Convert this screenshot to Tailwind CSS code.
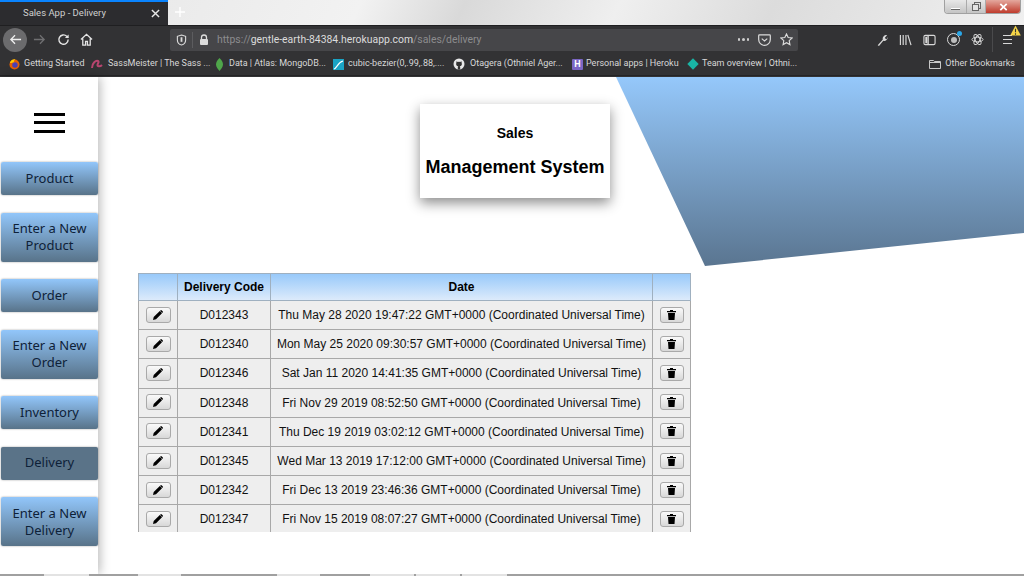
<!DOCTYPE html>
<html>
<head>
<title>Sales App - Delivery</title>
<meta charset="UTF-8" />
<script src="https://cdn.jsdelivr.net/npm/@tailwindcss/browser@4"></script>
</head>
<body class="bg-white">
<div class="w-[1024px] h-[576px] overflow-hidden flex flex-col font-['Roboto',sans-serif]">

  <!-- browser chrome -->
  <div class="h-[77px] shrink-0 flex flex-col bg-[#323234] text-[#d8d8d8] text-[9.5px]">
    <div class="relative h-[25px] flex bg-[linear-gradient(115deg,#e4e4e4_0%,#f2f2f2_35%,#d9d9d9_45%,#efefef_60%,#dcdcdc_75%,#f0f0f0_100%)]">
      <div class="w-[168px] bg-[#2c2c2f] border-t-2 border-[#0a84ff] flex items-center pl-[23px] pr-[8px] justify-between">
        <span class="text-[#d0d0d0]">Sales App - Delivery</span>
        <svg class="w-[9px] h-[9px]" viewBox="0 0 10 10"><path d="M1 1l8 8M9 1l-8 8" stroke="#e8e8e8" stroke-width="1.6"/></svg>
      </div>
      <svg class="w-[10px] h-[10px] ml-[7px] mt-[7px]" viewBox="0 0 10 10"><path d="M5 0v10M0 5h10" stroke="#fff" stroke-width="1.4"/></svg>
      <div class="absolute right-[3px] top-0 h-[14px] w-[77px] flex rounded-b-[4px] overflow-hidden border border-t-0 border-[#a0a0a0]">
        <div class="w-[21px] bg-[linear-gradient(#e8e8e8,#c4c4c4)] flex items-end justify-center pb-[3px]"><div class="w-[9px] h-[2px] bg-white border-b border-[#666]"></div></div>
        <div class="w-[20px] bg-[linear-gradient(#e8e8e8,#c4c4c4)] flex items-center justify-center border-x border-[#aaa]">
          <svg class="w-[9px] h-[9px]" viewBox="0 0 9 9" fill="none" stroke="#666"><rect x="2.500" y=".5" width="6" height="6"/><rect x=".5" y="2.500" width="6" height="6" fill="#e4e4e4"/></svg>
        </div>
        <div class="flex-1 bg-[linear-gradient(#e4a89e,#bf3b2c)] flex items-center justify-center">
          <svg class="w-[9px] h-[8px]" viewBox="0 0 10 10"><path d="M1 1l8 8M9 1l-8 8" stroke="#fff" stroke-width="2.2"/></svg>
        </div>
      </div>
    </div>

    <div class="h-[28px] flex items-center border-t border-[#1f1f21]">
      <div class="w-[24px] h-[24px] ml-[3px] shrink-0 rounded-full bg-[#6b6b6d] flex items-center justify-center">
        <svg class="w-[13px] h-[13px]" viewBox="0 0 14 14" fill="none" stroke="#eee" stroke-width="1.4"><path d="M13 7H2M6.500 2.500L2 7l4.500 4.500"/></svg>
      </div>
      <svg class="w-[13px] h-[13px] ml-[6px] shrink-0" viewBox="0 0 14 14" fill="none" stroke="#6f6f71" stroke-width="1.4"><path d="M1 7h11M7.500 2.500L12 7l-4.500 4.500"/></svg>
      <svg class="w-[13px] h-[13px] ml-[11px] shrink-0" viewBox="0 0 14 14" fill="none" stroke="#e4e4e4" stroke-width="1.5"><path d="M12 7a5 5 0 1 1-1.500-3.500L12 5"/><path d="M12.500 1.500V5.500H8.500" fill="#e4e4e4" stroke="none"/></svg>
      <svg class="w-[13px] h-[13px] ml-[10px] shrink-0" viewBox="0 0 14 14" fill="none" stroke="#e4e4e4" stroke-width="1.4"><path d="M1 7l6-5.500L13 7M3 6v7h3V9h2v4h3V6"/></svg>
      <div class="w-[628px] h-[22px] ml-[77px] shrink-0 bg-[#464649] rounded-[2px] flex items-center text-[10.4px]">
        <svg class="w-[11px] h-[12px] ml-[6px]" viewBox="0 0 12 13" fill="none" stroke="#dcdcdc" stroke-width="1.2"><path d="M6 1l4.500 1.500v4C10.500 9.500 8 11.500 6 12 4 11.500 1.500 9.500 1.500 6.500v-4z"/><path d="M6 3.500v5" stroke-width="2"/></svg>
        <div class="w-px h-[16px] bg-[#5c5c5f] ml-[5px]"></div>
        <svg class="w-[10px] h-[11px] ml-[6px]" viewBox="0 0 10 11"><path d="M2.500 5V3.500a2.500 2.500 0 0 1 5 0V5" fill="none" stroke="#dcdcdc" stroke-width="1.300"/><rect x="1" y="5" width="8" height="6" rx="1" fill="#dcdcdc"/></svg>
        <span class="ml-[8px] text-[#8c8c8e]">https://</span><span class="text-[#dcdcdc]">gentle-earth-84384.herokuapp.com</span><span class="text-[#8c8c8e]">/sales/delivery</span>
        <div class="ml-auto flex items-center gap-[9px] pr-[5px]">
          <span class="flex gap-[2px]"><i class="w-[2.500px] h-[2.500px] rounded-full bg-[#cfcfcf]"></i><i class="w-[2.500px] h-[2.500px] rounded-full bg-[#cfcfcf]"></i><i class="w-[2.500px] h-[2.500px] rounded-full bg-[#cfcfcf]"></i></span>
          <svg class="w-[13px] h-[12px]" viewBox="0 0 14 13" fill="none" stroke="#dcdcdc" stroke-width="1.300"><path d="M1.500 1h11a.8.8 0 0 1 .8.8V6A6.300 6.300 0 0 1 .7 6V1.800a.8.8 0 0 1 .8-.8z"/><path d="M4 5l3 2.500L10 5"/></svg>
          <svg class="w-[13px] h-[13px]" viewBox="0 0 14 14" fill="none" stroke="#dcdcdc" stroke-width="1.200"><path d="M7 1l1.800 3.900 4.200.5-3.100 2.900.8 4.200L7 10.400 3.300 12.500l.8-4.200L1 5.400l4.200-.5z"/></svg>
        </div>
      </div>
      <svg class="w-[12px] h-[12px] ml-[78px] shrink-0" viewBox="0 0 14 14"><path d="M2 13l6-6.500a4 4 0 0 1 5-5L10.500 4l.5 1.500 1.500.5 1-2.500a4 4 0 0 1-5 4.500L3.500 14z" fill="#d8d8d8"/></svg>
      <svg class="w-[13px] h-[12px] ml-[11px] shrink-0" viewBox="0 0 14 13" fill="none" stroke="#d8d8d8" stroke-width="1.300"><path d="M1.500 1v11M4.500 1v11M7.500 1v11M9.500 1l3.500 11"/></svg>
      <svg class="w-[13px] h-[12px] ml-[11px] shrink-0" viewBox="0 0 14 12" fill="none" stroke="#d8d8d8" stroke-width="1.200"><rect x="1" y="1" width="12" height="10" rx="1.500"/><path d="M5.500 1v10" stroke-width="1.500"/><path d="M2.500 2.500h2v7h-2z" fill="#d8d8d8" stroke="none"/></svg>
      <div class="relative w-[13px] h-[13px] ml-[11px] shrink-0 rounded-full border border-[#d8d8d8] flex items-center justify-center">
        <div class="w-[6px] h-[6px] rounded-full bg-[#bdbdbd]"></div>
        <div class="absolute -top-[3px] -right-[3px] w-[5px] h-[5px] rounded-full bg-[#2aa7e8]"></div>
      </div>
      <svg class="w-[13px] h-[13px] ml-[11px] shrink-0" viewBox="0 0 14 14" fill="none" stroke="#d8d8d8"><ellipse cx="7" cy="7" rx="6" ry="2.500"/><ellipse cx="7" cy="7" rx="6" ry="2.500" transform="rotate(60 7 7)"/><ellipse cx="7" cy="7" rx="6" ry="2.500" transform="rotate(120 7 7)"/></svg>
      <div class="w-px h-[25px] bg-[#4a4a4c] ml-[8px] shrink-0"></div>
      <div class="relative w-[9px] ml-[10px] shrink-0 flex flex-col gap-[3px]">
        <i class="h-px bg-[#d8d8d8]"></i><i class="h-px bg-[#d8d8d8]"></i><i class="h-px bg-[#d8d8d8]"></i>
        <svg class="absolute -top-[10px] left-[7px] w-[11px] h-[11px]" viewBox="0 0 12 12"><path d="M6 .5L11.800 11.500H.2z" fill="#f5d547"/><path d="M6 4v4M6 9v1.500" stroke="#333" stroke-width="1.200"/></svg>
      </div>
    </div>

    <div class="h-[23px] flex items-center text-[9px] pl-[9px] border-b border-[#242426]">
      <span class="flex items-center gap-[4px] w-[82px]">
        <svg class="w-[11px] h-[11px] shrink-0" viewBox="0 0 12 12"><circle cx="6" cy="6" r="5.500" fill="#e66000"/><circle cx="6.500" cy="6.500" r="3" fill="#4b3fb5"/><path d="M1 4c1-3 4-4 6-3.500C5 1.500 5 3 6 3.500 3 3.500 2 5 1 4z" fill="#ffcb00"/></svg>Getting Started</span>
      <span class="flex items-center gap-[5px] w-[125px]">
        <svg class="w-[12px] h-[10px] shrink-0" viewBox="0 0 12 10" fill="none" stroke="#b8456f" stroke-width="2"><path d="M1 9C1 4 5 1 7 2c2 1-2 4 0 5s3 0 4-1"/></svg>SassMeister | The Sass ...</span>
      <span class="flex items-center gap-[6px] w-[117px]">
        <svg class="w-[7px] h-[13px] shrink-0" viewBox="0 0 7 13"><path d="M3.500 0C5.500 2 7 4 7 6.500S5 11 3.500 13C2 11 0 9 0 6.500S1.500 2 3.500 0z" fill="#4fa64a"/></svg>Data | Atlas: MongoDB...</span>
      <span class="flex items-center gap-[4px] w-[120px]">
        <span class="w-[11px] h-[11px] shrink-0 bg-[#1aa3c4] overflow-hidden"><svg class="w-[11px] h-[11px]" viewBox="0 0 11 11" fill="none" stroke="#fff" stroke-width="1.200"><path d="M1 10C4 9 5 3 10 2"/></svg></span>cubic-bezier(0,.99,.88,....</span>
      <span class="flex items-center gap-[5px] w-[119px]">
        <svg class="w-[12px] h-[12px] shrink-0" viewBox="0 0 12 12"><circle cx="6" cy="6" r="5.500" fill="#e8e8e8"/><path d="M3.500 3.200l1.300.7a4 4 0 0 1 2.400 0l1.300-.7.200 1.800c.6 1.700-.3 3-2 3.300.4.300.5.700.5 1.200V11.500h-2.400V9.500c0-.5.100-.9.500-1.200-1.700-.3-2.600-1.600-2-3.300z" fill="#333"/></svg>Otagera (Othniel Ager...</span>
      <span class="flex items-center gap-[3px] w-[116px]">
        <span class="w-[11px] h-[11px] shrink-0 rounded-[1px] bg-[#7b66c4] text-white font-bold text-[9px] leading-[11px] text-center">H</span>Personal apps | Heroku</span>
      <span class="flex items-center gap-[4px]">
        <i class="w-[8px] h-[8px] mx-[1px] rotate-45 bg-[#19b5a5] shrink-0"></i>Team overview | Othni...</span>
      <span class="ml-auto flex items-center gap-[4px] pr-[9px]">
        <svg class="w-[12px] h-[10px]" viewBox="0 0 12 10" fill="none" stroke="#c8c8c8"><path d="M.5 1.500h4l1 1h6v7H.5z"/><path d="M.5 3.500h11"/></svg>Other Bookmarks</span>
    </div>
  </div>

  <!-- page -->
  <div class="relative flex-1 flex min-h-0 bg-white">
    <div class="absolute top-0 left-0 w-[1024px] h-[189px] bg-[linear-gradient(#95c8fb,#5a7590)] [clip-path:polygon(616px_0,1024px_0,1024px_156px,705px_189px)]"></div>

    <nav class="relative z-10 w-[98px] shrink-0 bg-white shadow-[2px_0_10px_rgba(0,0,0,0.28)] pl-[1px] flex flex-col text-[13px] text-center leading-[17px] text-[#0e2138] font-['Noto_Sans',sans-serif]">
      <div class="h-[85px] flex flex-col items-center justify-center gap-[5.500px] pt-[10px] pb-[4px]">
        <i class="w-[31px] h-[3px] bg-black"></i><i class="w-[31px] h-[3px] bg-black"></i><i class="w-[31px] h-[3px] bg-black"></i>
      </div>
      <div class="flex flex-col gap-[17.500px]">
        <a class="h-[33px] pb-[1px] flex items-center justify-center rounded-[2px] bg-[linear-gradient(#92c6fa,#587389)] shadow-[0_0_2px_rgba(0,0,0,0.4)]">Product</a>
        <a class="h-[49px] flex items-center justify-center rounded-[2px] bg-[linear-gradient(#92c6fa,#587389)] shadow-[0_0_2px_rgba(0,0,0,0.4)]">Enter a New<br />Product</a>
        <a class="h-[33px] flex items-center justify-center rounded-[2px] bg-[linear-gradient(#92c6fa,#587389)] shadow-[0_0_2px_rgba(0,0,0,0.4)]">Order</a>
        <a class="h-[49px] flex items-center justify-center rounded-[2px] bg-[linear-gradient(#92c6fa,#587389)] shadow-[0_0_2px_rgba(0,0,0,0.4)]">Enter a New<br />Order</a>
        <a class="h-[33px] flex items-center justify-center rounded-[2px] bg-[linear-gradient(#92c6fa,#587389)] shadow-[0_0_2px_rgba(0,0,0,0.4)]">Inventory</a>
        <a class="h-[33px] pb-[1px] flex items-center justify-center rounded-[2px] bg-[#5a7388] shadow-[0_0_2px_rgba(0,0,0,0.4)]">Delivery</a>
        <a class="h-[49px] flex items-center justify-center rounded-[2px] bg-[linear-gradient(#92c6fa,#587389)] shadow-[0_0_2px_rgba(0,0,0,0.4)]">Enter a New<br />Delivery</a>
      </div>
    </nav>

    <main class="relative flex-1 min-w-0 font-['Liberation_Sans',sans-serif] text-black">
      <div class="w-[190px] h-[94px] ml-[322px] mt-[27px] bg-white shadow-[0_5px_12px_rgba(0,0,0,0.45)] flex flex-col items-center font-bold">
        <div class="text-[14px] leading-[16px] mt-[21px]">Sales</div>
        <div class="text-[18px] leading-[21px] mt-[16px]">Management System</div>
      </div>

      <div class="w-[553px] h-[259px] ml-[40px] mt-[75px] overflow-hidden">
        <table class="w-[552px] table-fixed border-collapse text-[12px] text-center text-[#111]">
          <thead>
            <tr class="h-[27px] bg-[linear-gradient(#98c9fa,#dfecfb)]">
              <th class="w-[39px] border border-[#9fb0c0]"></th>
              <th class="w-[93px] border border-[#9fb0c0] text-black">Delivery Code</th>
              <th class="w-[382px] border border-[#9fb0c0] text-black">Date</th>
              <th class="w-[38px] border border-[#9fb0c0]"></th>
            </tr>
          </thead>
          <tbody class="bg-[#eeeeee]">
            <tr class="h-[29.200px]">
              <td class="border border-[#a8a8a8]"><button class="w-[25px] h-[16px] mb-[1px] mx-auto flex items-center justify-center rounded-[3px] border border-[#a9a9a9] bg-[linear-gradient(#fafafa,#d8d8d8)]"><svg class="w-[10px] h-[10px]" viewBox="0 0 10 10"><path d="M0 10l.7-3L6.800 1 9 3.200 3 9.300zM7.400.4a1 1 0 0 1 1.400 0l.8.8a1 1 0 0 1 0 1.400l-.3.300L7.100.7z" fill="#000"/></svg></button></td>
              <td class="border border-[#a8a8a8]">D012343</td>
              <td class="border border-[#a8a8a8]">Thu May 28 2020 19:47:22 GMT+0000 (Coordinated Universal Time)</td>
              <td class="border border-[#a8a8a8]"><button class="w-[24px] h-[16px] mb-[1px] mx-auto flex items-center justify-center rounded-[3px] border border-[#a9a9a9] bg-[linear-gradient(#fafafa,#d8d8d8)]"><svg class="w-[9px] h-[10px]" viewBox="0 0 9 10"><path d="M0 1h3V0h3v1h3v1.200H0zM1 3h7l-.5 7h-6z" fill="#000"/></svg></button></td>
            </tr>
            <tr class="h-[29.200px]">
              <td class="border border-[#a8a8a8]"><button class="w-[25px] h-[16px] mb-[1px] mx-auto flex items-center justify-center rounded-[3px] border border-[#a9a9a9] bg-[linear-gradient(#fafafa,#d8d8d8)]"><svg class="w-[10px] h-[10px]" viewBox="0 0 10 10"><path d="M0 10l.7-3L6.800 1 9 3.200 3 9.300zM7.400.4a1 1 0 0 1 1.400 0l.8.8a1 1 0 0 1 0 1.400l-.3.300L7.100.7z" fill="#000"/></svg></button></td>
              <td class="border border-[#a8a8a8]">D012340</td>
              <td class="border border-[#a8a8a8]">Mon May 25 2020 09:30:57 GMT+0000 (Coordinated Universal Time)</td>
              <td class="border border-[#a8a8a8]"><button class="w-[24px] h-[16px] mb-[1px] mx-auto flex items-center justify-center rounded-[3px] border border-[#a9a9a9] bg-[linear-gradient(#fafafa,#d8d8d8)]"><svg class="w-[9px] h-[10px]" viewBox="0 0 9 10"><path d="M0 1h3V0h3v1h3v1.200H0zM1 3h7l-.5 7h-6z" fill="#000"/></svg></button></td>
            </tr>
            <tr class="h-[29.200px]">
              <td class="border border-[#a8a8a8]"><button class="w-[25px] h-[16px] mb-[1px] mx-auto flex items-center justify-center rounded-[3px] border border-[#a9a9a9] bg-[linear-gradient(#fafafa,#d8d8d8)]"><svg class="w-[10px] h-[10px]" viewBox="0 0 10 10"><path d="M0 10l.7-3L6.800 1 9 3.200 3 9.300zM7.400.4a1 1 0 0 1 1.400 0l.8.8a1 1 0 0 1 0 1.400l-.3.300L7.100.7z" fill="#000"/></svg></button></td>
              <td class="border border-[#a8a8a8]">D012346</td>
              <td class="border border-[#a8a8a8]">Sat Jan 11 2020 14:41:35 GMT+0000 (Coordinated Universal Time)</td>
              <td class="border border-[#a8a8a8]"><button class="w-[24px] h-[16px] mb-[1px] mx-auto flex items-center justify-center rounded-[3px] border border-[#a9a9a9] bg-[linear-gradient(#fafafa,#d8d8d8)]"><svg class="w-[9px] h-[10px]" viewBox="0 0 9 10"><path d="M0 1h3V0h3v1h3v1.200H0zM1 3h7l-.5 7h-6z" fill="#000"/></svg></button></td>
            </tr>
            <tr class="h-[29.200px]">
              <td class="border border-[#a8a8a8]"><button class="w-[25px] h-[16px] mb-[1px] mx-auto flex items-center justify-center rounded-[3px] border border-[#a9a9a9] bg-[linear-gradient(#fafafa,#d8d8d8)]"><svg class="w-[10px] h-[10px]" viewBox="0 0 10 10"><path d="M0 10l.7-3L6.800 1 9 3.200 3 9.300zM7.400.4a1 1 0 0 1 1.400 0l.8.8a1 1 0 0 1 0 1.400l-.3.300L7.100.7z" fill="#000"/></svg></button></td>
              <td class="border border-[#a8a8a8]">D012348</td>
              <td class="border border-[#a8a8a8]">Fri Nov 29 2019 08:52:50 GMT+0000 (Coordinated Universal Time)</td>
              <td class="border border-[#a8a8a8]"><button class="w-[24px] h-[16px] mb-[1px] mx-auto flex items-center justify-center rounded-[3px] border border-[#a9a9a9] bg-[linear-gradient(#fafafa,#d8d8d8)]"><svg class="w-[9px] h-[10px]" viewBox="0 0 9 10"><path d="M0 1h3V0h3v1h3v1.200H0zM1 3h7l-.5 7h-6z" fill="#000"/></svg></button></td>
            </tr>
            <tr class="h-[29.200px]">
              <td class="border border-[#a8a8a8]"><button class="w-[25px] h-[16px] mb-[1px] mx-auto flex items-center justify-center rounded-[3px] border border-[#a9a9a9] bg-[linear-gradient(#fafafa,#d8d8d8)]"><svg class="w-[10px] h-[10px]" viewBox="0 0 10 10"><path d="M0 10l.7-3L6.800 1 9 3.200 3 9.300zM7.400.4a1 1 0 0 1 1.400 0l.8.8a1 1 0 0 1 0 1.400l-.3.300L7.100.7z" fill="#000"/></svg></button></td>
              <td class="border border-[#a8a8a8]">D012341</td>
              <td class="border border-[#a8a8a8]">Thu Dec 19 2019 03:02:12 GMT+0000 (Coordinated Universal Time)</td>
              <td class="border border-[#a8a8a8]"><button class="w-[24px] h-[16px] mb-[1px] mx-auto flex items-center justify-center rounded-[3px] border border-[#a9a9a9] bg-[linear-gradient(#fafafa,#d8d8d8)]"><svg class="w-[9px] h-[10px]" viewBox="0 0 9 10"><path d="M0 1h3V0h3v1h3v1.200H0zM1 3h7l-.5 7h-6z" fill="#000"/></svg></button></td>
            </tr>
            <tr class="h-[29.200px]">
              <td class="border border-[#a8a8a8]"><button class="w-[25px] h-[16px] mb-[1px] mx-auto flex items-center justify-center rounded-[3px] border border-[#a9a9a9] bg-[linear-gradient(#fafafa,#d8d8d8)]"><svg class="w-[10px] h-[10px]" viewBox="0 0 10 10"><path d="M0 10l.7-3L6.800 1 9 3.200 3 9.300zM7.400.4a1 1 0 0 1 1.400 0l.8.8a1 1 0 0 1 0 1.400l-.3.300L7.100.7z" fill="#000"/></svg></button></td>
              <td class="border border-[#a8a8a8]">D012345</td>
              <td class="border border-[#a8a8a8]">Wed Mar 13 2019 17:12:00 GMT+0000 (Coordinated Universal Time)</td>
              <td class="border border-[#a8a8a8]"><button class="w-[24px] h-[16px] mb-[1px] mx-auto flex items-center justify-center rounded-[3px] border border-[#a9a9a9] bg-[linear-gradient(#fafafa,#d8d8d8)]"><svg class="w-[9px] h-[10px]" viewBox="0 0 9 10"><path d="M0 1h3V0h3v1h3v1.200H0zM1 3h7l-.5 7h-6z" fill="#000"/></svg></button></td>
            </tr>
            <tr class="h-[29.200px]">
              <td class="border border-[#a8a8a8]"><button class="w-[25px] h-[16px] mb-[1px] mx-auto flex items-center justify-center rounded-[3px] border border-[#a9a9a9] bg-[linear-gradient(#fafafa,#d8d8d8)]"><svg class="w-[10px] h-[10px]" viewBox="0 0 10 10"><path d="M0 10l.7-3L6.800 1 9 3.200 3 9.300zM7.400.4a1 1 0 0 1 1.400 0l.8.8a1 1 0 0 1 0 1.400l-.3.300L7.100.7z" fill="#000"/></svg></button></td>
              <td class="border border-[#a8a8a8]">D012342</td>
              <td class="border border-[#a8a8a8]">Fri Dec 13 2019 23:46:36 GMT+0000 (Coordinated Universal Time)</td>
              <td class="border border-[#a8a8a8]"><button class="w-[24px] h-[16px] mb-[1px] mx-auto flex items-center justify-center rounded-[3px] border border-[#a9a9a9] bg-[linear-gradient(#fafafa,#d8d8d8)]"><svg class="w-[9px] h-[10px]" viewBox="0 0 9 10"><path d="M0 1h3V0h3v1h3v1.200H0zM1 3h7l-.5 7h-6z" fill="#000"/></svg></button></td>
            </tr>
            <tr class="h-[29.200px]">
              <td class="border border-[#a8a8a8]"><button class="w-[25px] h-[16px] mb-[1px] mx-auto flex items-center justify-center rounded-[3px] border border-[#a9a9a9] bg-[linear-gradient(#fafafa,#d8d8d8)]"><svg class="w-[10px] h-[10px]" viewBox="0 0 10 10"><path d="M0 10l.7-3L6.800 1 9 3.200 3 9.300zM7.400.4a1 1 0 0 1 1.400 0l.8.8a1 1 0 0 1 0 1.400l-.3.300L7.100.7z" fill="#000"/></svg></button></td>
              <td class="border border-[#a8a8a8]">D012347</td>
              <td class="border border-[#a8a8a8]">Fri Nov 15 2019 08:07:27 GMT+0000 (Coordinated Universal Time)</td>
              <td class="border border-[#a8a8a8]"><button class="w-[24px] h-[16px] mb-[1px] mx-auto flex items-center justify-center rounded-[3px] border border-[#a9a9a9] bg-[linear-gradient(#fafafa,#d8d8d8)]"><svg class="w-[9px] h-[10px]" viewBox="0 0 9 10"><path d="M0 1h3V0h3v1h3v1.200H0zM1 3h7l-.5 7h-6z" fill="#000"/></svg></button></td>
            </tr>
          </tbody>
        </table>
      </div>
    </main>
  </div>

  <!-- strip of the window behind -->
  <div class="relative z-20 h-[2px] shrink-0 bg-[#a0a0a0] flex">
    <i class="ml-[44px] w-[45px] bg-white/70"></i>
    <i class="ml-[49px] w-[43px] bg-white/70"></i>
    <i class="ml-[96px] w-[43px] bg-white/70"></i>
    <i class="ml-[50px] w-[44px] bg-white/70"></i>
    <i class="ml-[2px] w-[44px] bg-white/70"></i>
    <i class="ml-[2px] w-[45px] bg-white/70"></i>
  </div>
</div>
</body>
</html>
